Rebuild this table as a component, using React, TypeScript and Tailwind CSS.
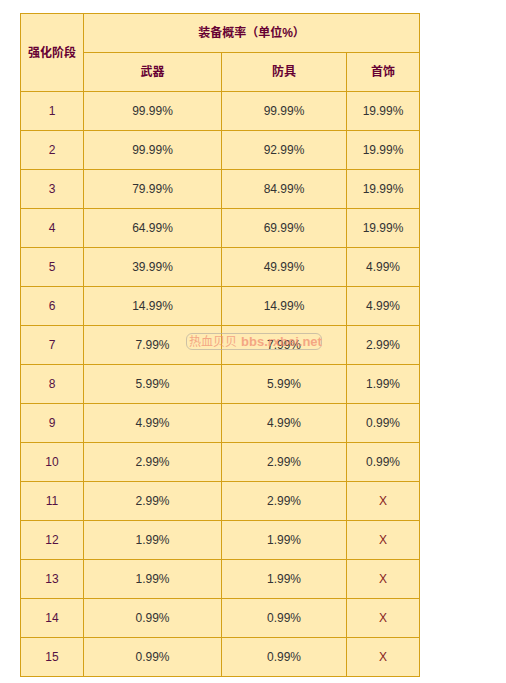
import React from "react";

const rows: [string, string, string, string][] = [
  ["1", "99.99%", "99.99%", "19.99%"],
  ["2", "99.99%", "92.99%", "19.99%"],
  ["3", "79.99%", "84.99%", "19.99%"],
  ["4", "64.99%", "69.99%", "19.99%"],
  ["5", "39.99%", "49.99%", "4.99%"],
  ["6", "14.99%", "14.99%", "4.99%"],
  ["7", "7.99%", "7.99%", "2.99%"],
  ["8", "5.99%", "5.99%", "1.99%"],
  ["9", "4.99%", "4.99%", "0.99%"],
  ["10", "2.99%", "2.99%", "0.99%"],
  ["11", "2.99%", "2.99%", "X"],
  ["12", "1.99%", "1.99%", "X"],
  ["13", "1.99%", "1.99%", "X"],
  ["14", "0.99%", "0.99%", "X"],
  ["15", "0.99%", "0.99%", "X"],
];

const cell =
  "flex items-center justify-center border-r border-b border-[#D4A017] bg-[#FFEBB3]";

export default function App() {
  return (
    <div
      className="w-[506px] h-[683px] bg-white pl-[20px] pt-[13px] text-[12px]"
      style={{ fontFamily: '"Liberation Sans", "Noto Sans CJK SC", sans-serif' }}
    >
      <div className="relative w-[400px] border-l border-t border-[#D4A017] grid grid-cols-[63px_138px_125px_73px] auto-rows-[39px]">
        <div className={`${cell} row-span-2 font-bold text-[#660033]`}>强化阶段</div>
        <div className={`${cell} col-span-3 font-bold text-[#660033]`}>装备概率（单位%）</div>
        <div className={`${cell} font-bold text-[#660033]`}>武器</div>
        <div className={`${cell} font-bold text-[#660033]`}>防具</div>
        <div className={`${cell} font-bold text-[#660033]`}>首饰</div>
        {rows.map((r) => (
          <React.Fragment key={r[0]}>
            <div className={`${cell} text-[#551144]`}>{r[0]}</div>
            <div className={`${cell} text-[#333333]`}>{r[1]}</div>
            <div className={`${cell} text-[#333333]`}>{r[2]}</div>
            <div className={`${cell} ${r[3] === "X" ? "text-[#882222]" : "text-[#333333]"}`}>{r[3]}</div>
          </React.Fragment>
        ))}
        <div className="absolute left-[165px] top-[319px] h-[17px] w-[136px] pl-[2px] flex items-center gap-[4px] rounded-[6px] border border-[#b8b0a0] font-bold text-[#f08a70] opacity-70 leading-none whitespace-nowrap">
          <span className="text-[12px] font-normal">热血贝贝</span>
          <span className="text-[13px]">bbs.rxbei.net</span>
        </div>
      </div>
    </div>
  );
}
